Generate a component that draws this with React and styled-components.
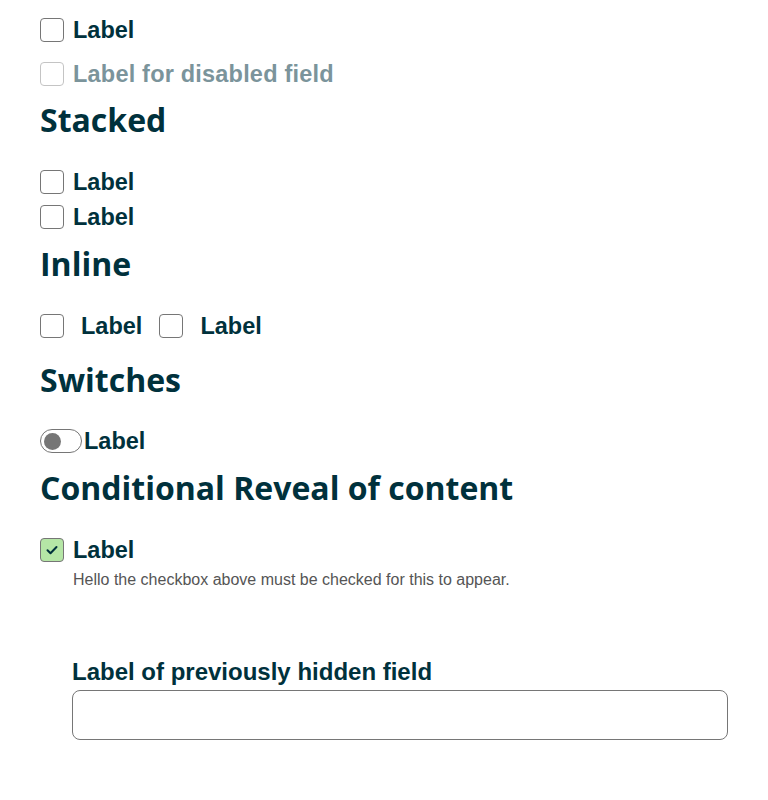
import React, { useState } from 'react'
import styled, { createGlobalStyle } from 'styled-components'

const GlobalStyle = createGlobalStyle`
	body {
		margin: 0;
		background: #ffffff;
		font-family: "Liberation Sans", Arial, sans-serif;
		color: #00313c;
	}
`

const Page = styled.div`
	padding: 18px 40px 40px 40px;
`

const Heading = styled.h2`
	font-family: "Open Sans", Lato, sans-serif;
	font-weight: 700;
	font-size: 32px;
	line-height: 40px;
	margin: ${(p) => p.$mt || 0}px 0 ${(p) => p.$mb || 0}px;
	color: #00313c;
`

const Stack = styled.div`
	display: flex;
	flex-direction: column;
	gap: ${(p) => p.$gap || 0}px;
`

const Row = styled.label`
	display: flex;
	align-items: center;
	gap: ${(p) => p.$gap ?? 9}px;
	height: 24px;
	font-size: 23.5px;
	font-weight: 700;
	letter-spacing: ${(p) => (p.$disabled ? '0.2px' : '0')};
	color: ${(p) => (p.$disabled ? '#7b949b' : '#00313c')};
	cursor: ${(p) => (p.$disabled ? 'default' : 'pointer')};
`

const InlineRow = styled.div`
	display: flex;
	align-items: center;
	gap: 17px;
`

const Box = styled.span`
	box-sizing: border-box;
	width: 24px;
	height: 24px;
	border-radius: 4px;
	border: 1px solid ${(p) => (p.$disabled ? '#c4c4c4' : '#767676')};
	background: ${(p) => (p.$checked ? '#b5e6a6' : '#fff')};
	display: inline-flex;
	align-items: center;
	justify-content: center;
	flex-shrink: 0;
`

const Switch = styled.span`
	box-sizing: border-box;
	width: 42px;
	height: 24px;
	border-radius: 12px;
	border: 1px solid #767676;
	padding: 0 3px;
	display: inline-flex;
	align-items: center;
	flex-shrink: 0;
	&::before {
		content: '';
		width: 17px;
		height: 17px;
		border-radius: 50%;
		background: #767676;
	}
`

const Hint = styled.p`
	margin: 9px 0 0 33px;
	font-size: 16px;
	color: #555;
`

const Reveal = styled.div`
	margin: 69px 0 0 32px;
	display: flex;
	flex-direction: column;
	gap: 4px;
`

const FieldLabel = styled.label`
	font-size: 24px;
	font-weight: 700;
	color: #00313c;
	line-height: 28px;
`

const TextInput = styled.input`
	box-sizing: border-box;
	width: 100%;
	height: 50px;
	border: 1px solid #767676;
	border-radius: 8px;
	font-family: inherit;
	font-size: 18px;
	padding: 0 12px;
	outline: none;
`

const Check = () => (
	<svg width="14" height="14" viewBox="0 0 14 14">
		<path d="M2.5 7.2l3 3 6-6.2" fill="none" stroke="#00313c" strokeWidth="2" strokeLinecap="round" strokeLinejoin="round" />
	</svg>
)

const Checkbox = ({ children, disabled, checked, gap }) => (
	<Row $disabled={disabled} $gap={gap}>
		<Box $disabled={disabled} $checked={checked}>
			{checked && <Check />}
		</Box>
		{children}
	</Row>
)

const App = () => {
	const [value, setValue] = useState('')

	return (
		<>
			<GlobalStyle />
			<Page>
				<Stack $gap={20}>
					<Checkbox>Label</Checkbox>
					<Checkbox disabled>Label for disabled field</Checkbox>
				</Stack>

				<Heading $mt={14} $mb={30}>Stacked</Heading>
				<Stack $gap={11}>
					<Checkbox>Label</Checkbox>
					<Checkbox>Label</Checkbox>
				</Stack>

				<Heading $mt={15} $mb={30}>Inline</Heading>
				<InlineRow>
					<Checkbox gap={17}>Label</Checkbox>
					<Checkbox gap={17}>Label</Checkbox>
				</InlineRow>

				<Heading $mt={22} $mb={29}>Switches</Heading>
				<Row $gap={2}>
					<Switch />
					Label
				</Row>

				<Heading $mt={15} $mb={30}>Conditional Reveal of content</Heading>
				<Checkbox checked>Label</Checkbox>
				<Hint>Hello the checkbox above must be checked for this to appear.</Hint>

				<Reveal>
					<FieldLabel htmlFor="hidden-field">Label of previously hidden field</FieldLabel>
					<TextInput id="hidden-field" value={value} onChange={(e) => setValue(e.target.value)} />
				</Reveal>
			</Page>
		</>
	)
}

export default App
